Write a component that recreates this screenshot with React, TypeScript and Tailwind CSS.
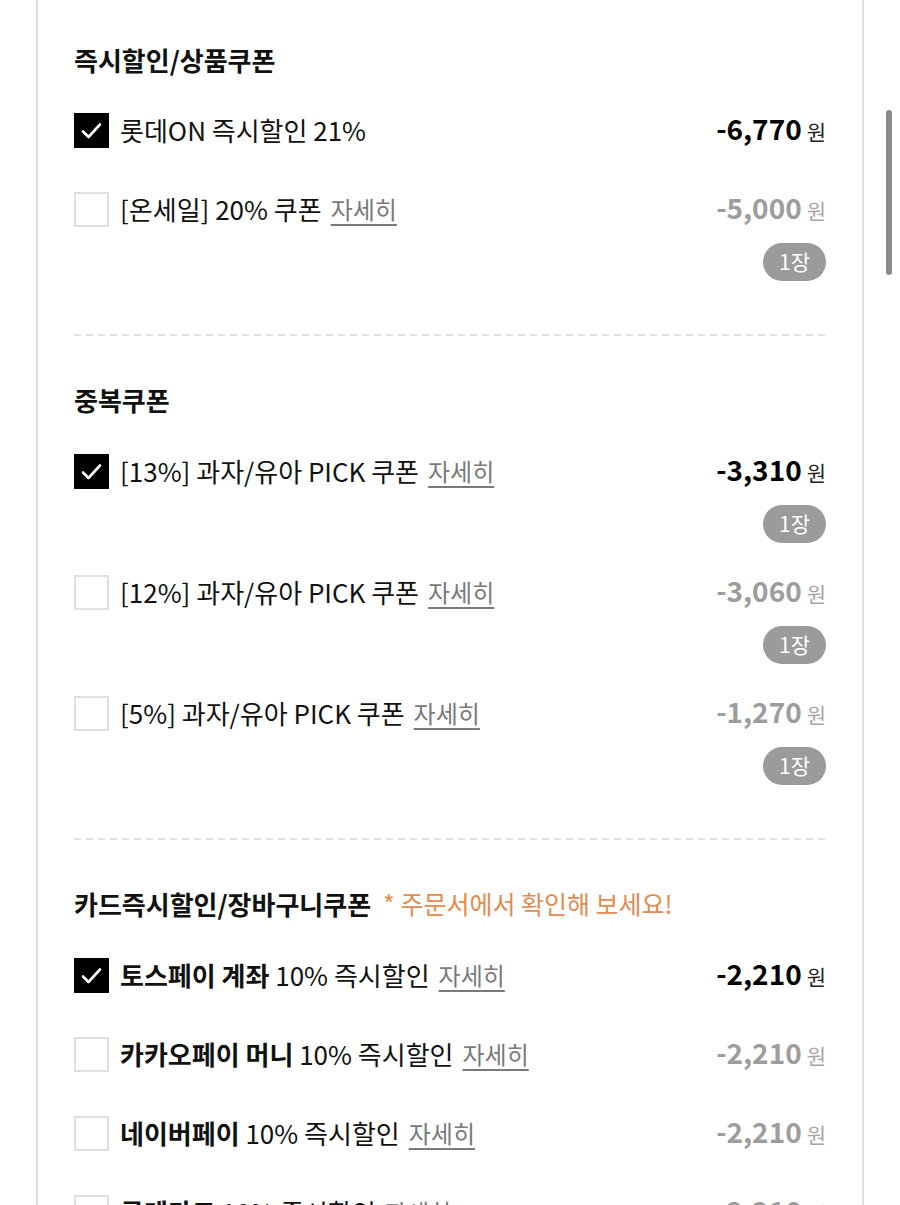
import type { ReactNode } from "react";

type Coupon = {
  label: ReactNode;
  amount: string;
  checked?: boolean;
  detail?: boolean;
  badge?: string;
};

type Section = {
  title: string;
  note?: string;
  items: Coupon[];
};

const sections: Section[] = [
  {
    title: "즉시할인/상품쿠폰",
    items: [
      { label: "롯데ON 즉시할인 21%", amount: "-6,770", checked: true },
      { label: "[온세일] 20% 쿠폰", amount: "-5,000", detail: true, badge: "1장" },
    ],
  },
  {
    title: "중복쿠폰",
    items: [
      { label: "[13%] 과자/유아 PICK 쿠폰", amount: "-3,310", checked: true, detail: true, badge: "1장" },
      { label: "[12%] 과자/유아 PICK 쿠폰", amount: "-3,060", detail: true, badge: "1장" },
      { label: "[5%] 과자/유아 PICK 쿠폰", amount: "-1,270", detail: true, badge: "1장" },
    ],
  },
  {
    title: "카드즉시할인/장바구니쿠폰",
    note: "* 주문서에서 확인해 보세요!",
    items: [
      {
        label: (
          <>
            <span className="font-bold">토스페이 계좌</span> 10% 즉시할인
          </>
        ),
        amount: "-2,210",
        checked: true,
        detail: true,
      },
      {
        label: (
          <>
            <span className="font-bold">카카오페이 머니</span> 10% 즉시할인
          </>
        ),
        amount: "-2,210",
        detail: true,
      },
      {
        label: (
          <>
            <span className="font-bold">네이버페이</span> 10% 즉시할인
          </>
        ),
        amount: "-2,210",
        detail: true,
      },
      {
        label: (
          <>
            <span className="font-bold">롯데카드</span> 10% 즉시할인
          </>
        ),
        amount: "-2,210",
        detail: true,
      },
    ],
  },
];

function CheckBox({ checked }: { checked?: boolean }) {
  if (checked) {
    return (
      <div className="w-[35px] h-[35px] shrink-0 bg-black flex items-center justify-center">
        <svg width="35" height="35" viewBox="0 0 35 35" fill="none">
          <path d="M9 18.5l5.5 5.5L26 11.5" stroke="#fff" strokeWidth="2.6" strokeLinecap="round" strokeLinejoin="round" />
        </svg>
      </div>
    );
  }
  return <div className="w-[35px] h-[35px] shrink-0 bg-white border-2 border-[#e0e0e0]" />;
}

function CouponRow({ item }: { item: Coupon }) {
  return (
    <div className={item.badge ? "pb-[29px]" : "pb-[39px]"}>
      <div className="flex items-center h-[40px]">
        <CheckBox checked={item.checked} />
        <div className="ml-[11px] flex-1 flex items-center text-[26px] leading-[34px] text-[#111] whitespace-nowrap">
          <span>{item.label}</span>
          {item.detail && (
            <span className="ml-[9px] text-[24px] text-[#7a7a7a] underline underline-offset-[5px] decoration-[1.5px]">자세히</span>
          )}
        </div>
        <div className="flex items-baseline -mt-[2px]">
          <span className={`text-[28px] leading-[34px] font-bold ${item.checked ? "text-black" : "text-[#9d9d9d]"}`}>
            {item.amount}
          </span>
          <span className={`ml-[5px] text-[21px] ${item.checked ? "text-[#222]" : "text-[#a5a5a5]"}`}>원</span>
        </div>
      </div>
      {item.badge && (
        <div className="flex justify-end mt-[14px]">
          <span className="h-[38px] w-[63px] rounded-full bg-[#9b9b9b] text-white text-[21px] flex items-center justify-center">
            {item.badge}
          </span>
        </div>
      )}
    </div>
  );
}

function Divider() {
  return (
    <div className="h-[2px] w-full bg-[linear-gradient(to_right,#e0e0e0_7px,transparent_7px)] bg-[length:12px_2px]" />
  );
}

export default function App() {
  return (
    <div className="relative w-[900px] h-[1205px] overflow-hidden bg-white font-['Noto_Sans_CJK_KR','Noto_Sans',sans-serif]">
      <div className="ml-[36px] w-[828px] min-h-full border-x-2 border-[#dedede] px-[36px]">
        {sections.map((section, i) => (
          <div key={section.title}>
            {i > 0 && <Divider />}
            <div className={i === 0 ? "pt-[44px] pb-[24px]" : "pt-[48px] pb-[24px]"}>
              <div className={`flex items-center h-[32px] ${i === 0 ? "mb-[34px]" : "mb-[35px]"}`}>
                <h2 className="text-[26px] leading-[32px] font-bold text-[#111]">{section.title}</h2>
                {section.note && (
                  <span className="ml-[12px] text-[25px] text-[#e38c4f]">{section.note}</span>
                )}
              </div>
              {section.items.map((item, j) => (
                <CouponRow key={j} item={item} />
              ))}
            </div>
          </div>
        ))}
      </div>
      <div className="absolute left-[886px] top-[110px] w-[6px] h-[165px] rounded-full bg-[#8a8a8a]" />
    </div>
  );
}
